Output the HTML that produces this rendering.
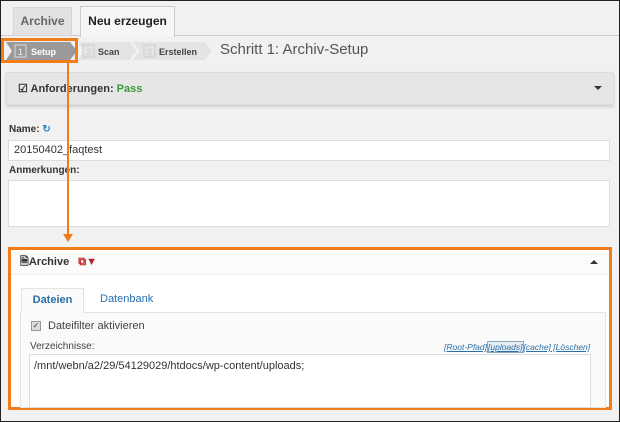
<!DOCTYPE html>
<html><head><meta charset="utf-8"><style>
*{box-sizing:border-box;margin:0;padding:0}
body{width:620px;height:422px;overflow:hidden;background:#f1f1f1;font-family:"Liberation Sans",sans-serif;color:#333;position:relative}
.a{position:absolute}
.frame{left:0;top:0;width:620px;height:422px;border:1px solid #222;pointer-events:none;z-index:20}
</style></head><body>
<div class="a frame"></div>
<div class="a" style="left:0;top:0;width:620px;height:36px;background:#f1f1f1;border-bottom:1px solid #ccc"></div>
<div class="a" style="left:13px;top:7px;width:59px;height:29px;background:#e2e2e2;border:1px solid #d6d6d6;font-size:12px;font-weight:bold;color:#666;text-align:center;line-height:27px">Archive</div>
<div class="a" style="left:80px;top:6px;width:95px;height:31px;background:#f6f6f6;border:1px solid #ccc;border-bottom:none;font-size:12px;font-weight:bold;color:#222;text-align:center;line-height:28px">Neu erzeugen</div>
<svg class="a" style="left:0;top:38px" width="220" height="26">
<polygon points="6,4 70,4 77,13 70,22 6,22 12,13" fill="#9a9a9a"/>
<polygon points="78,4 138,4 145,13 138,22 78,22 84,13" fill="#e4e4e4"/>
<polygon points="131,4 205,4 212,13 205,22 131,22 138,13" fill="#e4e4e4"/>
<polyline points="131,4 138,13 131,22" fill="none" stroke="#f4f4f4" stroke-width="2"/>
<rect x="15" y="7" width="11" height="12" fill="none" stroke="#ddd"/>
<text x="18" y="17" font-size="9" fill="#eee" font-family="Liberation Sans">1</text>
<text x="31" y="17" font-size="9" font-weight="bold" fill="#fff" font-family="Liberation Sans">Setup</text>
<rect x="83" y="7" width="11" height="12" fill="none" stroke="#ccc"/>
<text x="86" y="17" font-size="9" fill="#ccc" font-family="Liberation Sans">2</text>
<text x="98" y="17" font-size="9" font-weight="bold" fill="#444" font-family="Liberation Sans">Scan</text>
<rect x="144" y="7" width="11" height="12" fill="none" stroke="#ccc"/>
<text x="147" y="17" font-size="9" fill="#ccc" font-family="Liberation Sans">3</text>
<text x="159" y="17" font-size="9" font-weight="bold" fill="#444" font-family="Liberation Sans">Erstellen</text>
<rect x="2.5" y="1.5" width="74" height="22" fill="none" stroke="#f07c1a" stroke-width="3"/>
</svg>
<div class="a" style="left:220px;top:41px;font-size:15px;color:#555">Schritt 1: Archiv-Setup</div>
<div class="a" style="left:6px;top:72px;width:608px;height:33px;background:#e6e6e6;border:1px solid #ddd;box-shadow:0 2px 3px rgba(0,0,0,.15)"></div>
<div class="a" style="left:18px;top:82px;font-size:11px;font-weight:bold;color:#333">&#9745; Anforderungen: <span style="color:#3a9a3a">Pass</span></div>
<div class="a" style="left:594px;top:86px;width:0;height:0;border-left:4px solid transparent;border-right:4px solid transparent;border-top:4px solid #333"></div>
<div class="a" style="left:9px;top:124px;font-size:10px;font-weight:bold;color:#333">Name: <span style="color:#2a7fc0">&#8635;</span></div>
<div class="a" style="left:8px;top:140px;width:602px;height:21px;background:#fff;border:1px solid #ddd;font-size:11px;padding:3px 5px;color:#333">20150402_faqtest</div>
<div class="a" style="left:9px;top:165px;font-size:10px;font-weight:bold;color:#333">Anmerkungen:</div>
<div class="a" style="left:8px;top:180px;width:602px;height:47px;background:#fff;border:1px solid #ddd"></div>
<div class="a" style="left:67px;top:62px;width:2px;height:174px;background:#f07c1a;z-index:5"></div>
<div class="a" style="left:63px;top:234px;width:0;height:0;border-left:5px solid transparent;border-right:5px solid transparent;border-top:8px solid #f07c1a;z-index:5"></div>
<div class="a" style="left:8px;top:247px;width:604px;height:163px;background:#fff;border:3px solid #f07c1a;z-index:4"></div>
<div class="a" style="left:11px;top:250px;width:598px;height:25px;background:#fbfbfb;border-bottom:1px solid #eee;z-index:5"></div>
<div class="a" style="left:20px;top:253px;font-size:11px;font-weight:bold;color:#333;z-index:6">&#128462;Archive <span style="color:#b22;margin-left:6px">&#10697;&#9660;</span></div>
<div class="a" style="left:590px;top:260px;width:0;height:0;border-left:4px solid transparent;border-right:4px solid transparent;border-bottom:4px solid #333;z-index:6"></div>
<div class="a" style="left:20px;top:312px;width:586px;height:96px;background:#fafafa;border:1px solid #e4e4e4;z-index:5"></div>
<div class="a" style="left:21px;top:288px;width:63px;height:25px;background:#fafafa;border:1px solid #e4e4e4;border-bottom:none;font-size:11px;font-weight:bold;color:#2a6fa8;text-align:center;line-height:22px;z-index:6">Dateien</div>
<div class="a" style="left:100px;top:293px;font-size:11px;color:#2a6fa8;z-index:6">Datenbank</div>
<div class="a" style="left:31px;top:321px;width:10px;height:10px;border:1px solid #999;background:#ddd;font-size:8px;line-height:8px;text-align:center;color:#336;z-index:6">&#10003;</div>
<div class="a" style="left:48px;top:320px;font-size:11px;color:#444;z-index:6">Dateifilter aktivieren</div>
<div class="a" style="left:30px;top:341px;font-size:10px;color:#444;z-index:6">Verzeichnisse:</div>
<div class="a" style="left:444px;top:342px;font-size:8.5px;font-style:italic;color:#2a6fa8;text-decoration:underline;z-index:6;white-space:nowrap">[Root-Pfad]<span style="border:1px solid #8ab;background:#e6eef4">[uploads]</span>[cache] [Löschen]</div>
<div class="a" style="left:29px;top:354px;width:562px;height:54px;background:#fff;border:1px solid #ddd;font-size:11px;color:#333;padding:5px 4px;z-index:6">/mnt/webn/a2/29/54129029/htdocs/wp-content/uploads;</div>
</body></html>
